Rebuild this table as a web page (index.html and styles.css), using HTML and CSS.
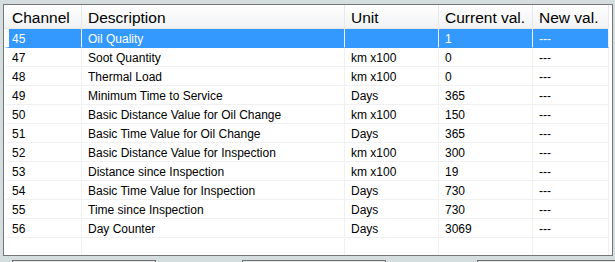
FILE: index.html
```html
<!DOCTYPE html>
<html lang="en">

<head>
    <meta charset="UTF-8">
    <title>Service Channels</title>
    <link rel="stylesheet" href="styles.css">
</head>

<body>
    <div class="frame">
        <table class="liste">
            <colgroup>
                <col class="c-ch">
                <col class="c-desc">
                <col class="c-unit">
                <col class="c-cur">
                <col class="c-new">
            </colgroup>
            <thead>
                <tr>
                    <th>Channel</th>
                    <th>Description</th>
                    <th>Unit</th>
                    <th>Current val.</th>
                    <th>New val.</th>
                </tr>
            </thead>
            <tbody>
                <tr class="valgt">
                    <td>45</td><td>Oil Quality</td><td></td><td>1</td><td>---</td>
                </tr>
                <tr>
                    <td>47</td><td>Soot Quantity</td><td>km x100</td><td>0</td><td>---</td>
                </tr>
                <tr>
                    <td>48</td><td>Thermal Load</td><td>km x100</td><td>0</td><td>---</td>
                </tr>
                <tr>
                    <td>49</td><td>Minimum Time to Service</td><td>Days</td><td>365</td><td>---</td>
                </tr>
                <tr>
                    <td>50</td><td>Basic Distance Value for Oil Change</td><td>km x100</td><td>150</td><td>---</td>
                </tr>
                <tr>
                    <td>51</td><td>Basic Time Value for Oil Change</td><td>Days</td><td>365</td><td>---</td>
                </tr>
                <tr>
                    <td>52</td><td>Basic Distance Value for Inspection</td><td>km x100</td><td>300</td><td>---</td>
                </tr>
                <tr>
                    <td>53</td><td>Distance since Inspection</td><td>km x100</td><td>19</td><td>---</td>
                </tr>
                <tr>
                    <td>54</td><td>Basic Time Value for Inspection</td><td>Days</td><td>730</td><td>---</td>
                </tr>
                <tr>
                    <td>55</td><td>Time since Inspection</td><td>Days</td><td>730</td><td>---</td>
                </tr>
                <tr>
                    <td>56</td><td>Day Counter</td><td>Days</td><td>3069</td><td>---</td>
                </tr>
                <tr class="tom">
                    <td></td><td></td><td></td><td></td><td></td>
                </tr>
            </tbody>
        </table>
    </div>

    <div class="knapper">
        <button></button>
        <button></button>
        <button></button>
    </div>
</body>

</html>
```

FILE: styles.css
```css
body {
    margin: 0;
    background-color: #d5dede;
    overflow: hidden;
    font-family: "Liberation Sans", Arial, sans-serif;
}

.frame {
    margin: 4px 0 0 3px;
    width: 608px;
    height: 250px;
    border: 1px solid #767676;
    background-color: #fff;
    overflow: hidden;
}

.liste {
    width: 605px;
    table-layout: fixed;
    border-collapse: separate;
    border-spacing: 0;
    font-size: 12px;
    color: #000;
}

.c-ch { width: 78px; }
.c-desc { width: 263px; }
.c-unit { width: 94px; }
.c-cur { width: 94px; }
.c-new { width: 76px; }

.liste th,
.liste td {
    box-sizing: border-box;
    padding: 0 0 0 6px;
    text-align: left;
    white-space: nowrap;
    overflow: hidden;
    border-right: 1px solid #f0f0f0;
}

.liste th {
    height: 24px;
    padding-top: 2px;
    font-size: 15.5px;
    font-weight: normal;
    background: linear-gradient(#ffffff, #f1f2f4);
    border-right-color: #e8e8e8;
    border-bottom: 1px solid #e5e5e5;
}

.liste th:first-child {
    padding-left: 8px;
}

.liste td {
    height: 19px;
    padding-top: 2px;
    border-bottom: 1px solid #f0f0f0;
}

.liste td:first-child {
    border-left: 5px solid #fff;
    padding-left: 3px;
}

.liste .valgt td {
    background-color: #3399ff;
    border-bottom-color: #3399ff;
    color: #fff;
}

.liste .valgt td:first-child {
    border-left-color: #fff;
}

.liste .tom td {
    height: 17px;
    border-bottom: none;
}

.knapper {
    display: flex;
    gap: 86px;
    margin: 4px 0 0 12px;
}

.knapper button {
    width: 144px;
    height: 2px;
    padding: 0;
    flex-shrink: 0;
    border: 1px solid #707070;
    border-bottom: none;
    background-color: #e4e4e4;
}

.knapper button:nth-child(3) {
    margin-left: 5px;
}
```
